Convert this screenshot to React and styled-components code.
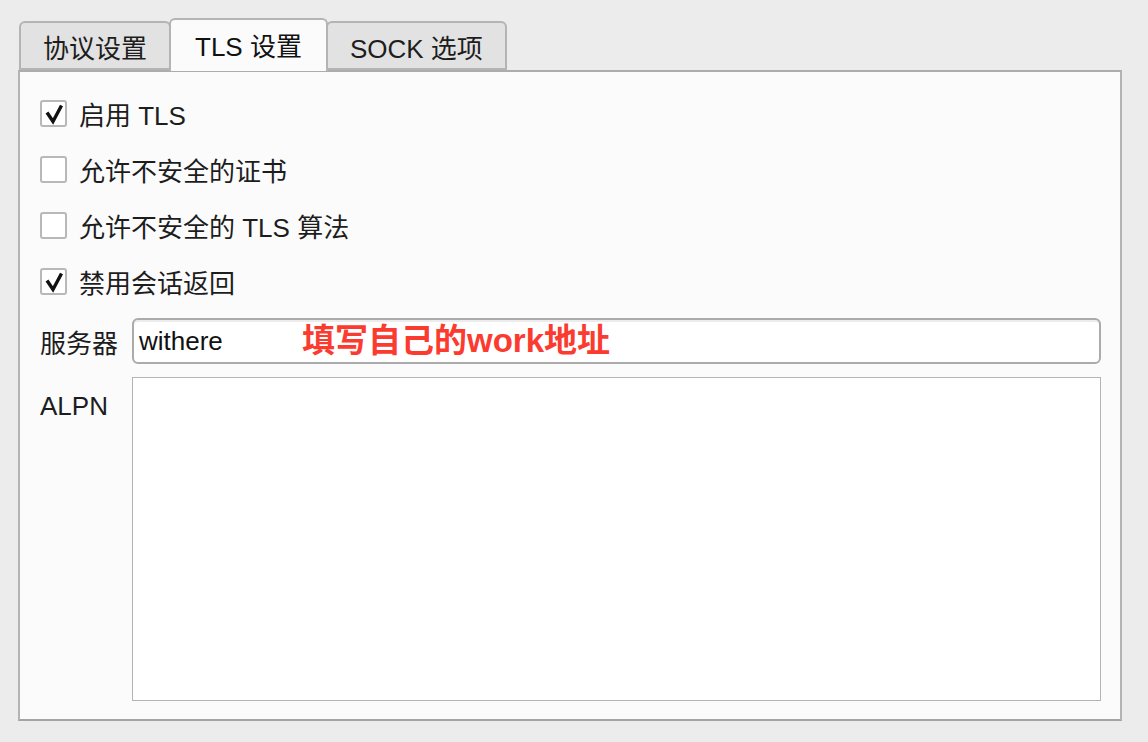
import styled, { createGlobalStyle } from "styled-components";

const Global = createGlobalStyle`
  html, body {
    margin: 0;
    background: #ececec;
  }
  body {
    font-family: "Liberation Sans", "Noto Sans CJK SC", sans-serif;
    color: #1d1d1d;
  }
`;

const tabs = ["协议设置", "TLS 设置", "SOCK 选项"];

const options = [
  { label: "启用 TLS", checked: true },
  { label: "允许不安全的证书", checked: false },
  { label: "允许不安全的 TLS 算法", checked: false },
  { label: "禁用会话返回", checked: true },
];

const Check = () => (
  <svg width="27" height="27" viewBox="0 0 27 27">
    <polyline
      points="7,12.5 13,21.5 21.5,5.5"
      fill="none"
      stroke="#111"
      strokeWidth="3.4"
      strokeLinecap="butt"
      strokeLinejoin="miter"
    />
  </svg>
);

const App = () => {
  return (
    <Page>
      <Global />
      <TabBar>
        {tabs.map((t, i) => (
          <Tab key={t} active={i === 1}>
            {t}
          </Tab>
        ))}
      </TabBar>
      <Panel>
        {options.map((o) => (
          <CheckRow key={o.label}>
            <Box>{o.checked && <Check />}</Box>
            <span>{o.label}</span>
          </CheckRow>
        ))}
        <Form>
          <Label>服务器</Label>
          <Input>
            <span>withere</span>
            <Note>填写自己的work地址</Note>
          </Input>
          <Label top>ALPN</Label>
          <TextArea />
        </Form>
      </Panel>
    </Page>
  );
};

export default App;

const Page = styled.div`
  padding: 18px 0 0 18px;
  width: 1104px;
`;

const TabBar = styled.div`
  display: flex;
  align-items: flex-end;
  padding-left: 1px;
  height: 52px;
`;

const Tab = styled.div`
  box-sizing: border-box;
  height: ${(p) => (p.active ? "53px" : "49px")};
  padding: 0 ${(p) => (p.active ? "24px" : "22px")};
  padding-top: 2px;
  padding-bottom: ${(p) => (p.active ? "4px" : "0")};
  margin-bottom: ${(p) => (p.active ? "-1px" : "0")};
  display: flex;
  align-items: center;
  font-size: 26px;
  color: ${(p) => (p.active ? "#111" : "#1d1d1d")};
  background: ${(p) => (p.active ? "#fbfbfb" : "#e2e2e2")};
  border: 2px solid #b4b4b4;
  border-bottom: ${(p) => (p.active ? "none" : "2px solid #b4b4b4")};
  border-radius: 6px 6px 0 0;
  position: relative;
  z-index: ${(p) => (p.active ? 2 : 1)};
  & + & {
    margin-left: -2px;
  }
`;

const Panel = styled.div`
  box-sizing: border-box;
  height: 651px;
  background: #fbfbfb;
  border: 2px solid #b4b4b4;
  border-bottom-color: #a4a4a4;
  border-top-color: #acacac;
  padding: 13px 19px 0 20px;
  box-shadow: 0 2px 0 #dcdcdc;
`;

const CheckRow = styled.div`
  display: flex;
  align-items: center;
  gap: 12px;
  height: 56px;
  font-size: 26px;
`;

const Box = styled.div`
  box-sizing: border-box;
  flex: none;
  width: 27px;
  height: 27px;
  border: 2px solid #b8b8b8;
  border-radius: 3px;
  background: #fff;
  position: relative;
  svg {
    position: absolute;
    left: -2px;
    top: -2px;
  }
`;

const Form = styled.div`
  display: grid;
  grid-template-columns: 92px 1fr;
  row-gap: 13px;
  margin-top: 9px;
`;

const Label = styled.div`
  font-size: 26px;
  align-self: ${(p) => (p.top ? "start" : "center")};
  padding-top: ${(p) => (p.top ? "14px" : "0")};
`;

const Input = styled.div`
  box-sizing: border-box;
  height: 46px;
  border: 2px solid #ababab;
  border-radius: 6px;
  background: #fff;
  box-shadow: inset 0 2px 0 #ececec;
  display: flex;
  align-items: center;
  padding-left: 5px;
  font-size: 26px;
  color: #111;
  position: relative;
`;

const Note = styled.span`
  position: absolute;
  left: 168px;
  top: 0px;
  color: #fb3b30;
  font-weight: 700;
  font-size: 33px;
  line-height: 42px;
`;

const TextArea = styled.div`
  box-sizing: border-box;
  height: 324px;
  background: #fff;
  border: 1px solid #b4b4b4;
`;
